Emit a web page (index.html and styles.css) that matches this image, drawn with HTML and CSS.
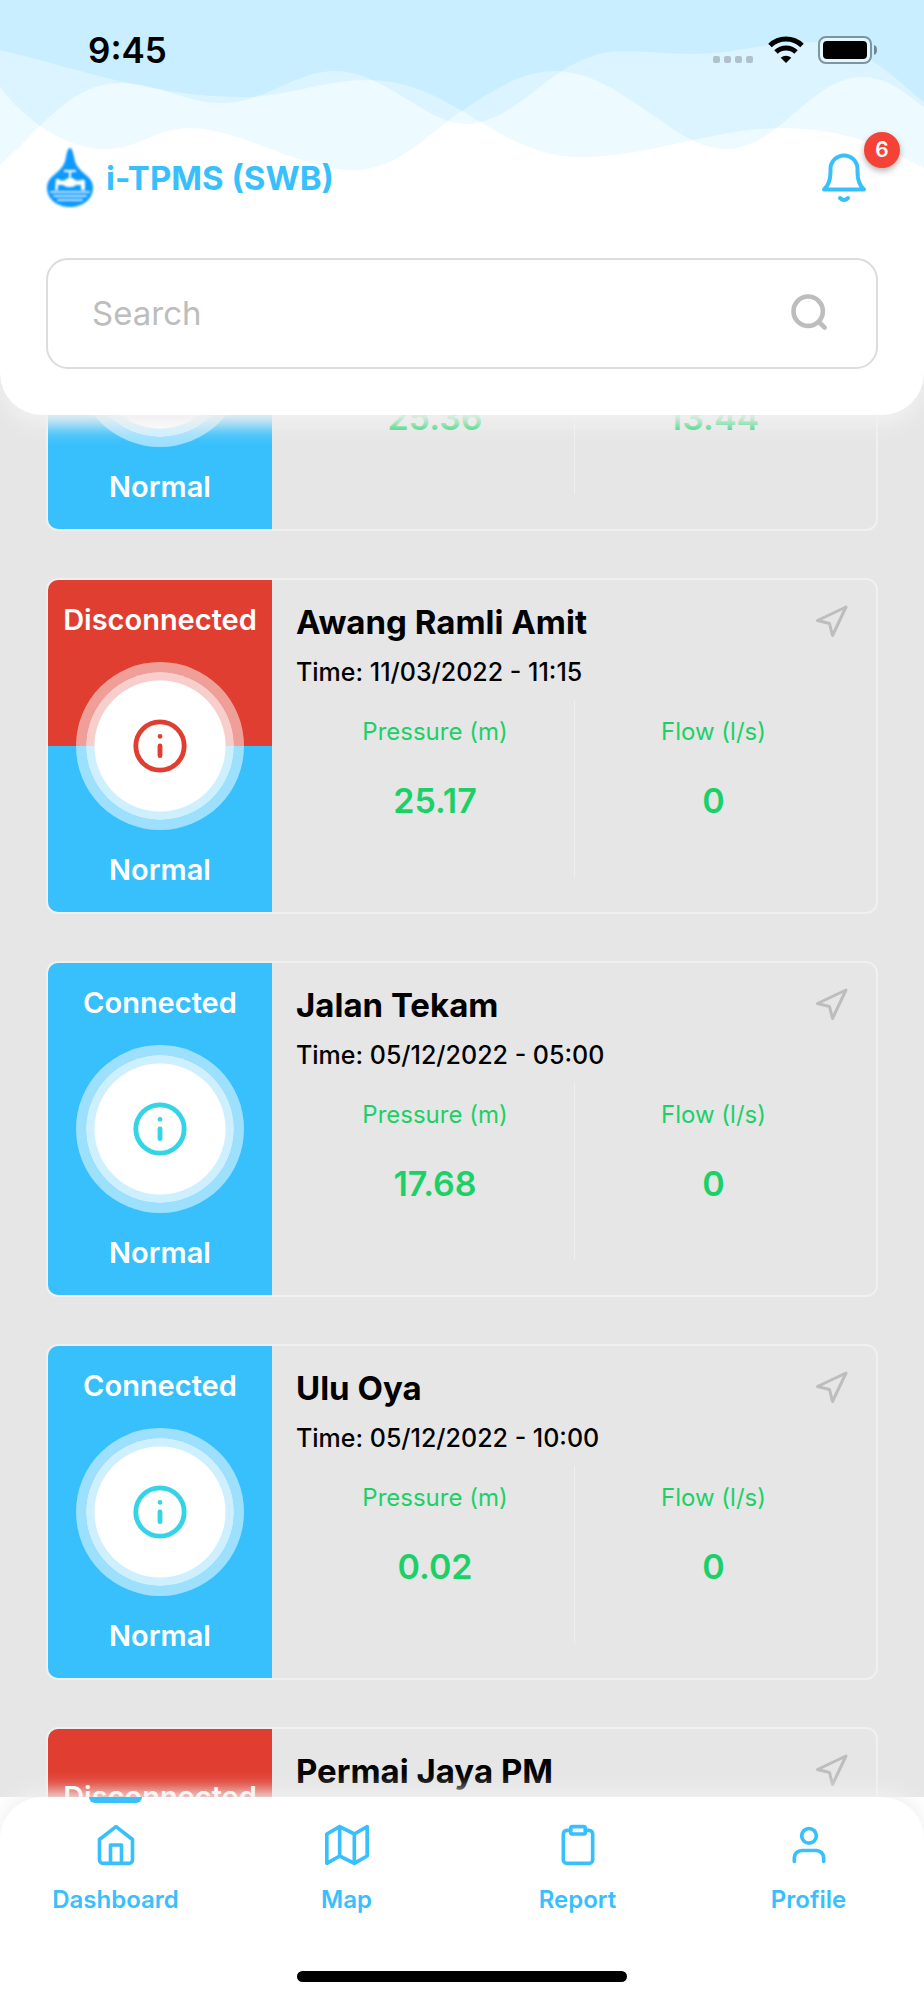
FILE: index.html
```html
<!DOCTYPE html>
<html lang="en">

<head>
    <meta charset="utf-8">
    <meta name="viewport" content="width=device-width, initial-scale=1">
    <title>i-TPMS (SWB)</title>
    <link rel="stylesheet" href="styles.css">
</head>

<body>
    <!-- shared icons -->
    <svg class="sprite" aria-hidden="true">
        <symbol id="icon-info" viewBox="0 0 24 24">
            <circle cx="12" cy="12" r="10" />
            <path d="M12 12v4M12 8h.01" />
        </symbol>
        <symbol id="icon-navigate" viewBox="0 0 24 24">
            <path d="M3 11 22 2l-9 19-2-8z" />
        </symbol>
    </svg>

    <div class="app">
        <header class="header">
            <svg class="waves" viewBox="0 0 924 171" preserveAspectRatio="none" aria-hidden="true">
                <rect width="924" height="171" fill="#c9eeff" />
                <path class="wave" d="M0 50C60 63 150 97 240 97C290 97 320 80 368 80C410 80 440 98 462 111C500 134 535 157 580 157C650 157 715 128 780 128C850 128 890 150 924 168V171H0Z" />
                <path class="wave" d="M0 165C40 130 70 83 120 83C160 83 185 103 222 103C265 103 295 71 335 71C385 71 425 123 465 124C520 124 555 51 622 51C650 51 665 54 695 54C735 54 765 42 810 42C865 42 895 80 924 102V171H0Z" />
                <path class="wave" d="M0 87C25 120 65 149 105 149C140 149 155 128 190 128C240 128 300 170 355 170C400 170 435 127 462 111C490 92 520 71 555 71C620 71 675 149 725 149C780 149 810 77 862 77C888 77 908 95 924 107V171H0Z" />
            </svg>

            <div class="status-bar">
                <span class="clock">9:45</span>
                <div class="signals">
                    <svg class="dots" width="41" height="7" viewBox="0 0 41 7" fill="#afc2cc">
                        <rect width="7" height="7" rx="2" />
                        <rect x="11" width="7" height="7" rx="2" />
                        <rect x="22" width="7" height="7" rx="2" />
                        <rect x="33" width="7" height="7" rx="2" />
                    </svg>
                    <svg width="36" height="28" viewBox="0 0 36 28" fill="none" stroke="#000" stroke-width="5">
                        <path d="M2 9.500A23 23 0 0 1 34 9.500" />
                        <path d="M8 16A14.500 14.500 0 0 1 28 16" />
                        <path d="M18 27l-5.300-5.200a8 8 0 0 1 10.600 0z" fill="#000" stroke="none" />
                    </svg>
                    <svg width="60" height="28" viewBox="0 0 60 28">
                        <rect x="1" y="1" width="52" height="26" rx="7" fill="#e4f7ff" stroke="#7d959f" stroke-width="2" />
                        <rect x="5" y="5" width="44" height="18" rx="4" />
                        <path d="M56 9c4 1 4 9 0 10z" fill="#6f8791" />
                    </svg>
                </div>
            </div>

            <div class="brand-row">
                <svg class="logo" width="48" height="62" viewBox="0 0 48 62">
                    <path d="M24 1C26 1 27 5 28 10C29 18 34 23 40 28C45 32 47 36 47 41C47 52 37 60 24 60S1 52 1 41C1 36 3 32 8 28C14 23 19 18 20 10C21 5 22 1 24 1Z" fill="#0d99ff" />
                    <path d="M18 23h12v2h-5v6h-2v-6h-5z" fill="#fff" />
                    <path d="M10 32c5 0 5 3 9 1c4-3 7-3 10 0c4 2 8-2 10 1v9h-4v-5h-5c-3 3-9 3-13 0h-5v5h-3z" fill="#fff" />
                    <path d="M5 45h38M8 49h32M12 53h24" stroke="#c3e6ff" stroke-width="2" stroke-dasharray="6 1" />
                </svg>
                <h1>i-TPMS (SWB)</h1>
                <button type="button" class="bell" aria-label="Notifications">
                    <svg width="48" height="52" viewBox="0 0 48 52">
                        <path d="M24 3.500A13.500 13.500 0 0 1 37.500 17V20C37.500 29 40 34 44 37.500H4C8 34 10.500 29 10.500 20V17A13.500 13.500 0 0 1 24 3.500Z" />
                        <path d="M20 46Q24 50 28 46" />
                    </svg>
                    <span class="badge">6</span>
                </button>
            </div>

            <form class="search">
                <input type="search" placeholder="Search" aria-label="Search">
                <button type="submit" aria-label="Search">
                    <svg width="44" height="44" viewBox="0 0 24 24">
                        <circle cx="11" cy="11" r="8" />
                        <path d="M20 20l-3-3" />
                    </svg>
                </button>
            </form>
        </header>

        <main class="stations">
            <article class="card">
                <div class="state">
                    <div class="half">Connected</div>
                    <div class="half">Normal</div>
                    <span class="ring"><svg><use href="#icon-info" /></svg></span>
                </div>
                <div class="details">
                    <div class="metrics">
                        <div class="metric"><span>Pressure (m)</span><strong>25.36</strong></div>
                        <div class="metric"><span>Flow (l/s)</span><strong>13.44</strong></div>
                    </div>
                </div>
            </article>

            <article class="card offline">
                <div class="state">
                    <div class="half">Disconnected</div>
                    <div class="half">Normal</div>
                    <span class="ring"><svg><use href="#icon-info" /></svg></span>
                </div>
                <div class="details">
                    <div class="title-row">
                        <h2>Awang Ramli Amit</h2>
                        <button type="button" aria-label="Directions"><svg><use href="#icon-navigate" /></svg></button>
                    </div>
                    <p>Time: 11/03/2022 - 11:15</p>
                    <div class="metrics">
                        <div class="metric"><span>Pressure (m)</span><strong>25.17</strong></div>
                        <div class="metric"><span>Flow (l/s)</span><strong>0</strong></div>
                    </div>
                </div>
            </article>

            <article class="card">
                <div class="state">
                    <div class="half">Connected</div>
                    <div class="half">Normal</div>
                    <span class="ring"><svg><use href="#icon-info" /></svg></span>
                </div>
                <div class="details">
                    <div class="title-row">
                        <h2>Jalan Tekam</h2>
                        <button type="button" aria-label="Directions"><svg><use href="#icon-navigate" /></svg></button>
                    </div>
                    <p>Time: 05/12/2022 - 05:00</p>
                    <div class="metrics">
                        <div class="metric"><span>Pressure (m)</span><strong>17.68</strong></div>
                        <div class="metric"><span>Flow (l/s)</span><strong>0</strong></div>
                    </div>
                </div>
            </article>

            <article class="card">
                <div class="state">
                    <div class="half">Connected</div>
                    <div class="half">Normal</div>
                    <span class="ring"><svg><use href="#icon-info" /></svg></span>
                </div>
                <div class="details">
                    <div class="title-row">
                        <h2>Ulu Oya</h2>
                        <button type="button" aria-label="Directions"><svg><use href="#icon-navigate" /></svg></button>
                    </div>
                    <p>Time: 05/12/2022 - 10:00</p>
                    <div class="metrics">
                        <div class="metric"><span>Pressure (m)</span><strong>0.02</strong></div>
                        <div class="metric"><span>Flow (l/s)</span><strong>0</strong></div>
                    </div>
                </div>
            </article>

            <article class="card offline tall">
                <div class="state">
                    <div class="half">Disconnected</div>
                    <div class="half"></div>
                </div>
                <div class="details">
                    <div class="title-row">
                        <h2>Permai Jaya PM</h2>
                        <button type="button" aria-label="Directions"><svg><use href="#icon-navigate" /></svg></button>
                    </div>
                </div>
            </article>
        </main>

        <footer class="footer">
            <div class="tabs-panel">
                <nav class="tabs">
                    <a href="#dashboard" class="active">
                        <svg viewBox="0 0 24 24"><path d="M3 9l9-7 9 7v11a2 2 0 0 1-2 2H5a2 2 0 0 1-2-2zM9 22V12h6v10" /></svg>
                        Dashboard
                    </a>
                    <a href="#map">
                        <svg viewBox="0 0 24 24"><path d="M1 6v16l7-4 8 4 7-4V2l-7 4-8-4zM8 2v16M16 6v16" /></svg>
                        Map
                    </a>
                    <a href="#report">
                        <svg viewBox="0 0 24 24"><path d="M16 4h2a2 2 0 0 1 2 2v14a2 2 0 0 1-2 2H6a2 2 0 0 1-2-2V6a2 2 0 0 1 2-2h2" /><rect x="8" y="2" width="8" height="4" rx="1" /></svg>
                        Report
                    </a>
                    <a href="#profile">
                        <svg viewBox="0 0 24 24"><path d="M20 21v-2a4 4 0 0 0-4-4H8a4 4 0 0 0-4 4v2" /><circle cx="12" cy="7" r="4" /></svg>
                        Profile
                    </a>
                </nav>
                <div class="home-indicator"></div>
            </div>
        </footer>
    </div>
</body>

</html>
```
FILE: styles.css
```css
* {
    box-sizing: border-box;
}

body {
    margin: 0;
    font-family: Inter, "Liberation Sans", sans-serif;
    background-color: #e6e6e6;
    color: #000;
}

h1, h2, p {
    margin: 0;
}

button {
    border: none;
    padding: 0;
    background: none;
    font-family: inherit;
    cursor: pointer;
}

svg {
    display: block;
    stroke-linecap: round;
    stroke-linejoin: round;
}

.sprite {
    display: none;
}

.app {
    display: flex;
    flex-direction: column;
    height: 100vh;
    overflow: hidden;
}

/* header */

.header {
    position: relative;
    z-index: 2;
    flex: none;
    padding: 0 46px 46px;
    background-color: #fff;
    border-radius: 0 0 42px 42px;
    box-shadow: 0 11px 18px #f0f0f0;
}

.waves {
    position: absolute;
    top: 0;
    left: 0;
    width: 100%;
    height: 171px;
    isolation: isolate;
}

/* every overlap gets one step lighter, three layers end up white */
.wave {
    fill: #120600;
    mix-blend-mode: plus-lighter;
}

.status-bar {
    position: relative;
    display: flex;
    align-items: center;
    justify-content: space-between;
    height: 100px;
    padding-left: 42px;
}

.clock {
    font-size: 35px;
    font-weight: 600;
}

.signals {
    display: flex;
    align-items: center;
    gap: 14px;
}

.signals svg {
    stroke-linecap: butt;
}

.dots {
    align-self: flex-end;
    margin-bottom: 1px;
}

.brand-row {
    position: relative;
    display: flex;
    align-items: center;
    gap: 12px;
    margin-top: 47px;
}

.logo {
    filter: blur(1px);
}

h1 {
    flex: 1;
    font-size: 33px;
    line-height: 40px;
    font-weight: 700;
    color: #38c0fc;
}

.bell {
    position: relative;
    margin-right: 10px;
}

.bell svg {
    fill: none;
    stroke: #38c0fc;
    stroke-width: 4;
}

.badge {
    position: absolute;
    top: -20px;
    right: -32px;
    width: 36px;
    height: 36px;
    border-radius: 50%;
    background-color: #f44336;
    box-shadow: 0 3px 6px rgba(0, 0, 0, 0.3);
    color: #fff;
    font-size: 21px;
    line-height: 36px;
    font-weight: 600;
    text-align: center;
}

.search {
    display: flex;
    align-items: center;
    height: 111px;
    margin-top: 49px;
    padding: 0 44px 2px;
    border: 2px solid #dcdcdc;
    border-radius: 22px;
}

.search input {
    flex: 1;
    min-width: 0;
    padding: 0;
    border: none;
    outline: none;
    background: none;
    font-family: inherit;
    font-size: 33px;
    line-height: 40px;
}

.search input::placeholder {
    color: #bdbdbd;
    opacity: 1;
}

.search svg {
    fill: none;
    stroke: #bdbdbd;
    stroke-width: 2.5;
}

/* station list, slides under the header */

.stations {
    display: flex;
    flex: 1;
    flex-direction: column;
    gap: 47px;
    min-height: 0;
    margin-top: -220px;
    padding: 0 46px;
    overflow-y: auto;
    scrollbar-width: none;
}

.card {
    display: grid;
    flex: none;
    grid-template-columns: 224px 1fr;
    min-height: 336px;
    border: 2px solid #f0f0f0;
    border-radius: 12px;
    overflow: hidden;
}

.state {
    position: relative;
    display: flex;
    flex-direction: column;
    color: #fff;
    font-size: 29px;
    line-height: 36px;
    font-weight: 600;
    text-align: center;
}

.half {
    display: flex;
    flex: 1;
    align-items: flex-end;
    justify-content: center;
    padding: 22px 0 24px;
    background-color: #38c0fc;
}

.half:first-child {
    align-items: flex-start;
}

.offline .half:first-child {
    background-color: #e03e31;
}

.tall {
    min-height: 392px;
}

.tall .half {
    padding: 50px 0;
}

.ring {
    position: absolute;
    top: 50%;
    left: 50%;
    display: grid;
    place-items: center;
    width: 168px;
    height: 168px;
    border: 10px solid rgba(255, 255, 255, 0.5);
    border-radius: 50%;
    background: radial-gradient(circle, #fff 65px, rgba(255, 255, 255, 0.75) 66px) padding-box;
    transform: translate(-50%, -50%);
}

.ring svg {
    width: 58px;
    height: 58px;
    fill: none;
    stroke: #35d3e6;
    stroke-width: 2;
}

.offline .ring svg {
    stroke: #e03e31;
}

.details {
    display: flex;
    flex-direction: column;
    padding: 22px 24px 35px;
}

.title-row {
    display: flex;
    align-items: center;
    justify-content: space-between;
}

h2 {
    font-size: 33px;
    line-height: 40px;
    font-weight: 700;
}

.title-row svg {
    width: 36px;
    height: 36px;
    margin-right: 3px;
    fill: none;
    stroke: #bdbdbd;
    stroke-width: 2;
}

.details p {
    margin-top: 14px;
    font-size: 25px;
    line-height: 32px;
    font-weight: 500;
}

.metrics {
    display: grid;
    grid-template-columns: 1fr 1fr;
    height: 177px;
    margin-top: auto;
}

.metric {
    display: flex;
    flex-direction: column;
    align-items: center;
    gap: 33px;
    padding-top: 16px;
    color: #1bd167;
    font-size: 24px;
    line-height: 32px;
}

.metric + .metric {
    border-left: 1px solid #f0f0f0;
}

.metric strong {
    font-size: 34px;
    line-height: 40px;
    font-weight: 600;
}

/* bottom tabs */

.footer {
    position: relative;
    z-index: 2;
    flex: none;
    background-color: #fff;
}

.tabs-panel {
    padding-bottom: 18px;
    background-color: #fff;
    border-radius: 42px 42px 0 0;
    box-shadow: 0 -6px 18px #f0f0f0;
}

.tabs {
    display: grid;
    grid-template-columns: repeat(4, 1fr);
}

.tabs a {
    position: relative;
    display: flex;
    flex-direction: column;
    align-items: center;
    gap: 18px;
    padding-top: 26px;
    color: #38c0fc;
    font-size: 24px;
    line-height: 30px;
    font-weight: 600;
    text-decoration: none;
}

.tabs svg {
    width: 44px;
    height: 44px;
    fill: none;
    stroke: currentColor;
    stroke-width: 2;
}

.tabs .active::before {
    content: "";
    position: absolute;
    top: 0;
    width: 53px;
    height: 6px;
    border-radius: 0 0 6px 6px;
    background-color: #38c0fc;
}

.home-indicator {
    width: 330px;
    height: 11px;
    margin: 56px auto 0;
    border-radius: 6px;
    background-color: #000;
}
```
